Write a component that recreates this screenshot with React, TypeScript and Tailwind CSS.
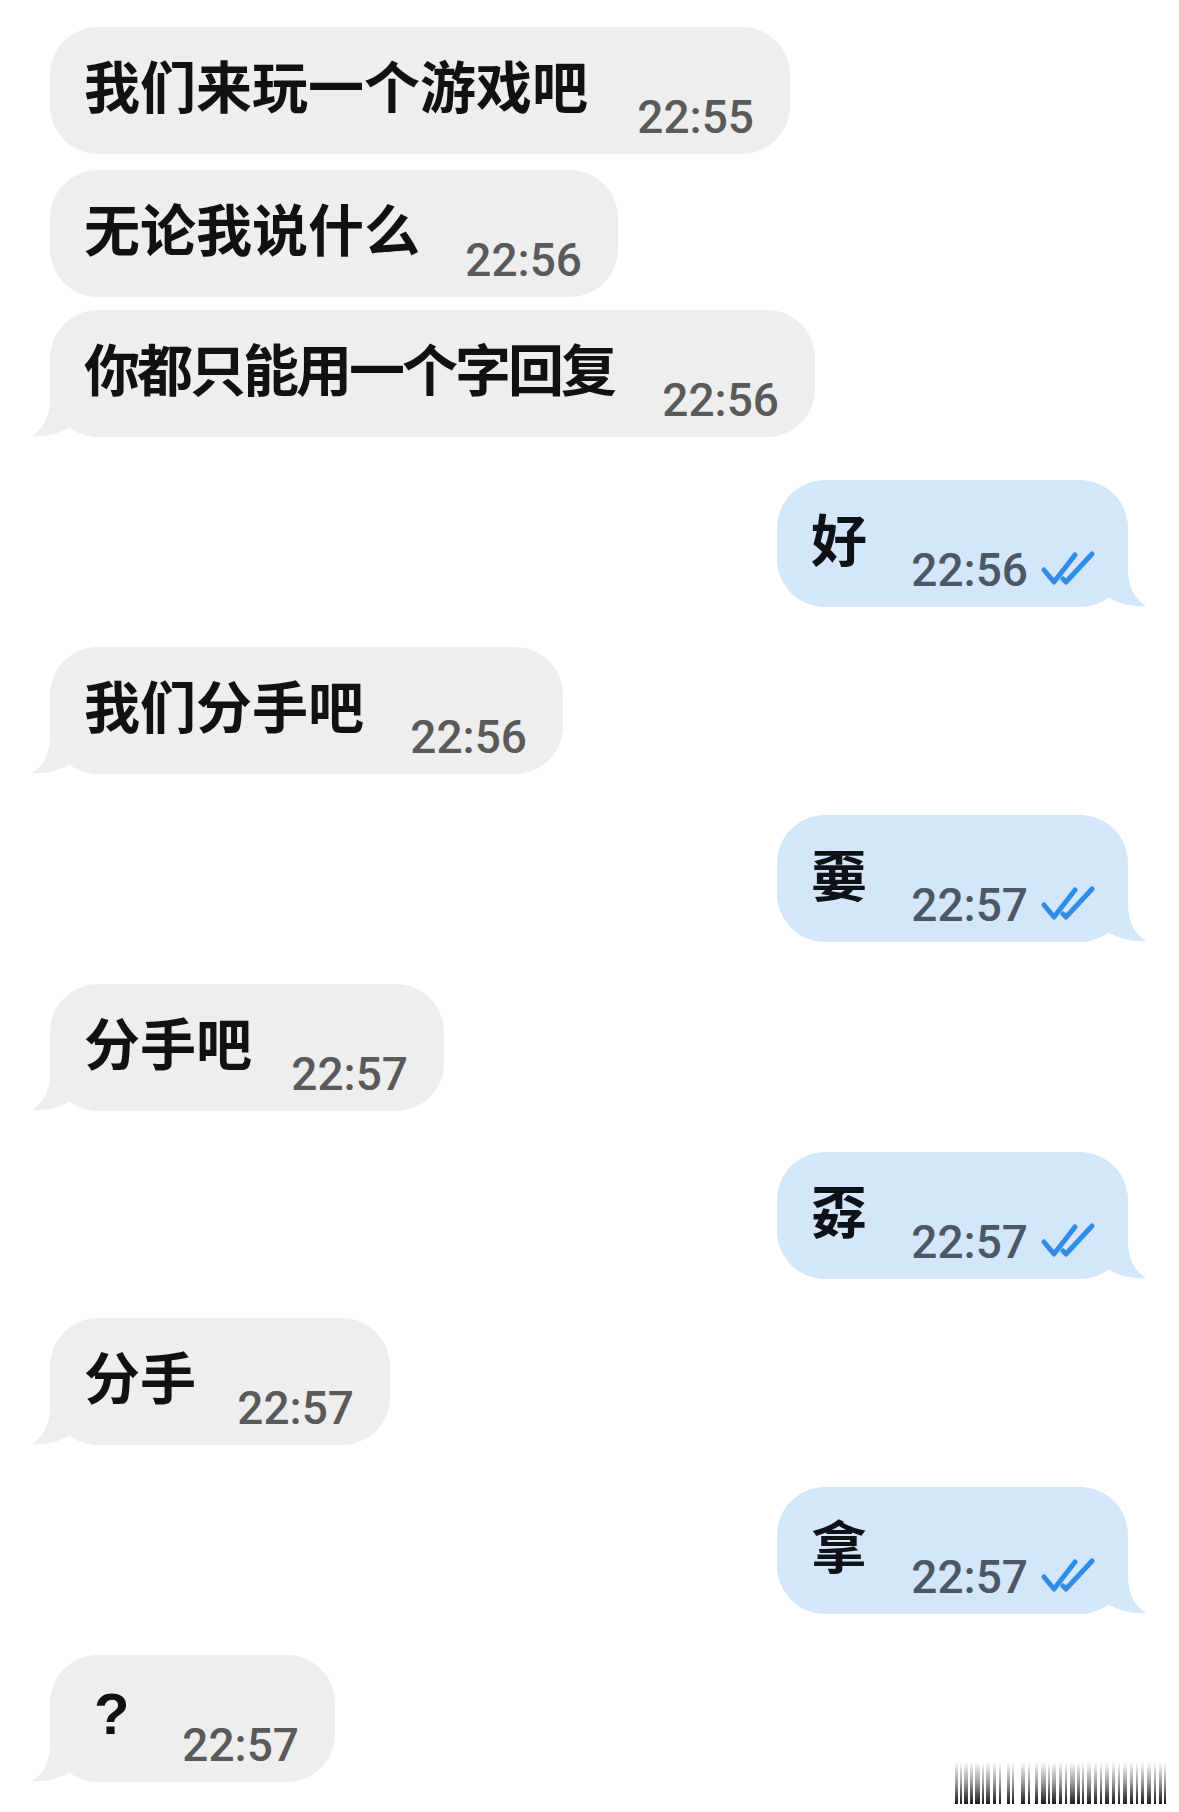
import React from "react";

const cjk = "font-['Noto_Sans_CJK_SC','Noto_Sans',sans-serif]";

function LeftTail() {
  return (
    <svg
      className="absolute bottom-0 left-[-18px] h-[60px] w-[70px]"
      viewBox="0 0 70 60"
      aria-hidden
    >
      <path
        d="M18,0 L18,22 C18,40 11,52 0,59 C13,60 27,57 38,50 C46,56 56,60 70,60 L70,0 Z"
        fill="#eeeeee"
      />
    </svg>
  );
}

function RightTail() {
  return (
    <svg
      className="absolute bottom-0 right-[-18px] h-[60px] w-[70px]"
      viewBox="0 0 70 60"
      aria-hidden
    >
      <path
        d="M52,0 L52,22 C52,40 59,52 70,59 C57,60 43,57 32,50 C24,56 14,60 0,60 L0,0 Z"
        fill="#d4e6fa"
      />
    </svg>
  );
}

function DoubleCheck() {
  return (
    <svg
      className="relative mb-[21px] ml-[13px] h-[35px] w-[55px] self-end"
      viewBox="0 0 55 35"
      fill="none"
      stroke="#2f8de6"
      strokeWidth={5}
      strokeLinecap="round"
      strokeLinejoin="round"
      aria-hidden
    >
      <path d="M3,19 L13,31 L34,4" />
      <path d="M22,28 L25,31 L51,3" />
    </svg>
  );
}

function LeftBubble({
  text,
  time,
  tail,
  widthClass,
  mtClass,
  textClass,
}: {
  text: string;
  time: string;
  tail?: boolean;
  widthClass: string;
  mtClass: string;
  textClass?: string;
}) {
  return (
    <div className={`flex ${mtClass}`}>
      <div
        className={`relative ml-[50px] flex h-[127px] ${widthClass} rounded-[48px] bg-[#eeeeee] pl-[34px] pr-[36px]`}
      >
        {tail && <LeftTail />}
        <span
          className={
            textClass ??
            `relative pt-[29px] text-[56px] font-bold leading-none text-[#111111] ${cjk}`
          }
        >
          {text}
        </span>
        <span className="relative ml-auto self-end pb-[14px] font-['Roboto',sans-serif] text-[46px] font-medium leading-none text-[#5a5a5a]">
          {time}
        </span>
      </div>
    </div>
  );
}

function RightBubble({ text, time, mtClass }: { text: string; time: string; mtClass: string }) {
  return (
    <div className={`flex justify-end ${mtClass}`}>
      <div className="relative mr-[51px] flex h-[127px] w-[351px] rounded-[48px] bg-[#d4e6fa] pl-[34px] pr-[32px]">
        <RightTail />
        <span
          className={`relative pt-[29px] text-[56px] font-bold leading-none text-[#0e1116] ${cjk}`}
        >
          {text}
        </span>
        <span className="relative ml-auto self-end pb-[14px] font-['Roboto',sans-serif] text-[46px] font-medium leading-none text-[#4a5868]">
          {time}
        </span>
        <DoubleCheck />
      </div>
    </div>
  );
}

function Watermark() {
  const bars: [number, number][] = [
    [0, 3], [5, 2], [9, 4], [15, 3], [20, 5], [27, 2], [31, 4], [38, 3], [44, 2],
    [52, 3], [57, 2], [66, 4], [73, 2], [80, 3], [86, 5], [93, 2], [97, 4], [104, 3],
    [110, 2], [115, 5], [122, 3], [127, 2], [132, 4], [139, 3], [145, 2], [150, 4],
    [157, 3], [163, 2], [168, 4], [175, 3], [181, 2], [186, 3], [192, 4], [199, 2],
    [204, 3], [209, 2],
  ];
  return (
    <svg
      className="absolute bottom-[4px] right-[11px] h-[46px] w-[213px]"
      viewBox="0 0 213 46"
      aria-hidden
    >
      <defs>
        <linearGradient id="wm" x1="0" y1="0" x2="0" y2="1">
          <stop offset="0" stopColor="#ffffff" />
          <stop offset="0.5" stopColor="#9a9a9a" />
          <stop offset="1" stopColor="#1a1a1a" />
        </linearGradient>
      </defs>
      {bars.map(([x, w], i) => (
        <rect key={i} x={x} y={0} width={w} height={42} fill="url(#wm)" />
      ))}
    </svg>
  );
}

export default function App() {
  return (
    <div className="relative h-[1812px] w-full overflow-hidden bg-white pt-[27px]">
      <LeftBubble text="我们来玩一个游戏吧" time="22:55" widthClass="w-[740px]" mtClass="mt-0" />
      <LeftBubble text="无论我说什么" time="22:56" widthClass="w-[568px]" mtClass="mt-[16px]" />
      <LeftBubble
        text="你都只能用一个字回复"
        time="22:56"
        tail
        widthClass="w-[765px]"
        mtClass="mt-[13px]"
        textClass={`relative pt-[29px] text-[56px] font-bold leading-none tracking-[-3px] text-[#111111] ${cjk}`}
      />
      <RightBubble text="好" time="22:56" mtClass="mt-[43px]" />
      <LeftBubble text="我们分手吧" time="22:56" tail widthClass="w-[513px]" mtClass="mt-[40px]" />
      <RightBubble text="嫑" time="22:57" mtClass="mt-[41px]" />
      <LeftBubble text="分手吧" time="22:57" tail widthClass="w-[394px]" mtClass="mt-[42px]" />
      <RightBubble text="孬" time="22:57" mtClass="mt-[41px]" />
      <LeftBubble text="分手" time="22:57" tail widthClass="w-[340px]" mtClass="mt-[39px]" />
      <RightBubble text="拿" time="22:57" mtClass="mt-[42px]" />
      <LeftBubble
        text="?"
        time="22:57"
        tail
        widthClass="w-[285px]"
        mtClass="mt-[41px]"
        textClass="relative ml-[10px] pt-[30px] font-['Liberation_Sans',sans-serif] text-[58px] font-bold leading-none text-[#111111]"
      />
      <Watermark />
    </div>
  );
}
